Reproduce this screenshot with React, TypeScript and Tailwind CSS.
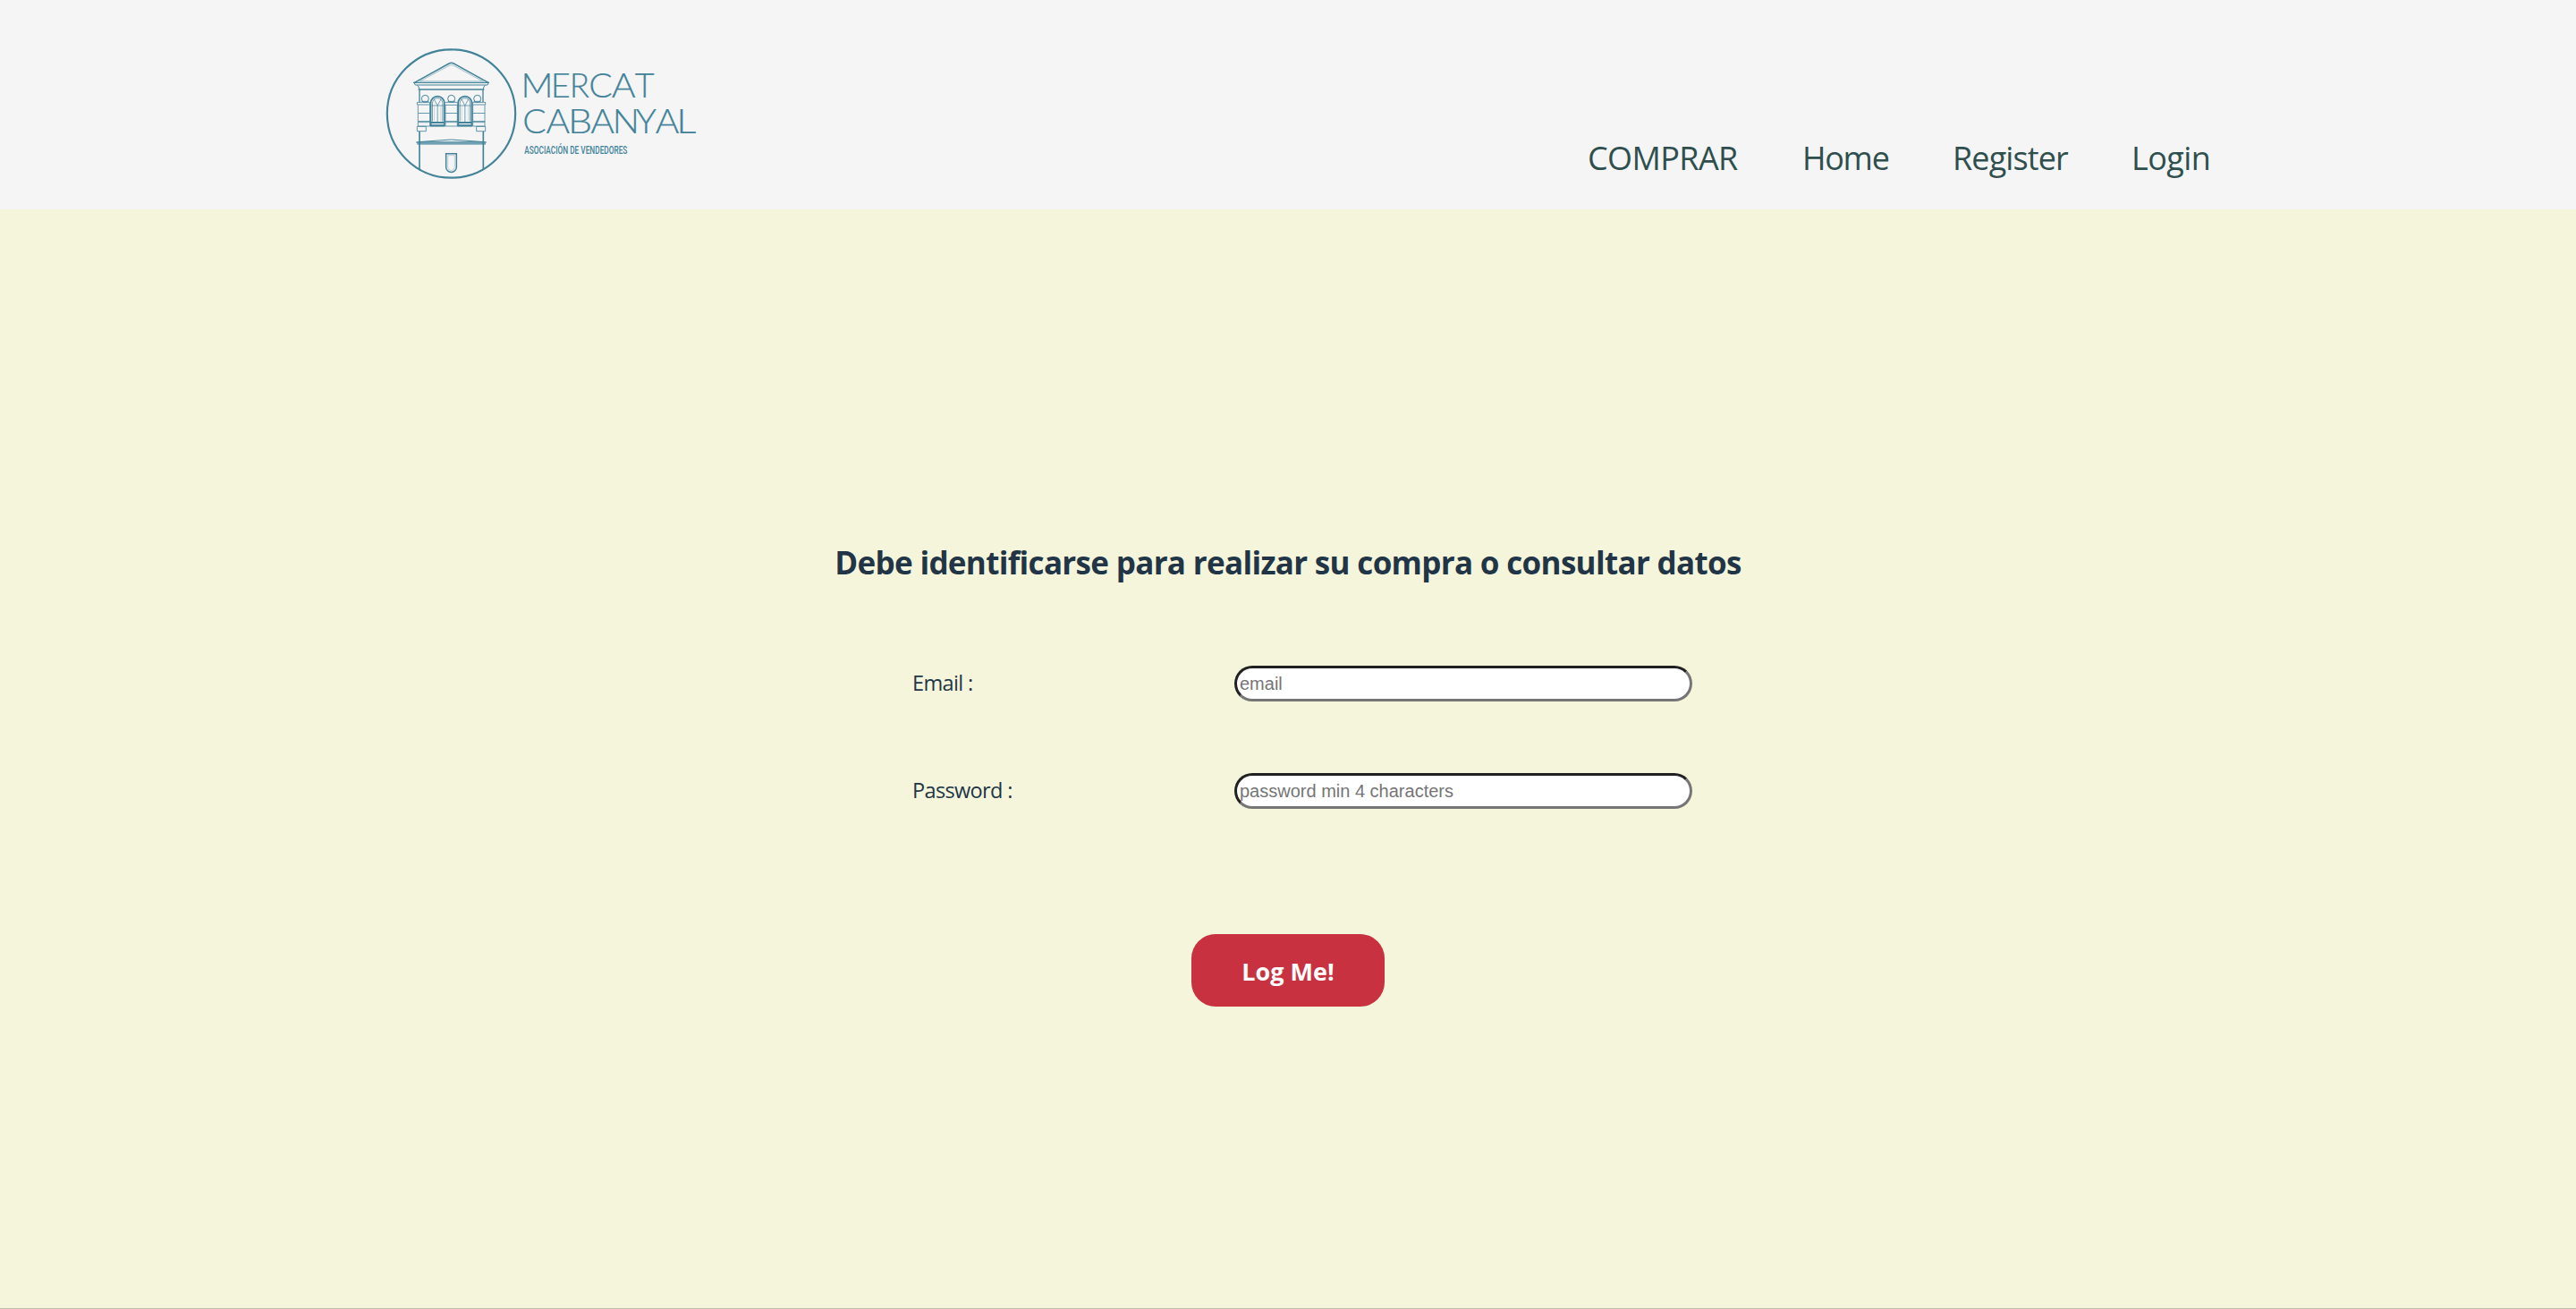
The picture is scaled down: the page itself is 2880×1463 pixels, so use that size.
const links = [
  { label: 'COMPRAR', style: 'w-[168px] tracking-[-0.6px]' },
  { label: 'Home', style: 'w-[96px] tracking-[-1.3px]' },
  { label: 'Register', style: 'w-[128px] tracking-[-0.9px]' },
  { label: 'Login', style: 'w-[88px] tracking-[-0.6px]' },
];

const wordmark: { y: number; letters: [string, number, number][] }[] = [
  { y: 207, letters: [['M', 487.5, 1.06], ['E', 587, 1.02], ['R', 650, 0.98], ['C', 715, 1.05], ['A', 791.5, 1.1], ['T', 869.5, 1.01]] },
  { y: 328, letters: [['C', 493, 1.05], ['A', 571.5, 1.09], ['B', 645, 1.15], ['A', 720.5, 1.09], ['N', 794.5, 1.07], ['Y', 872, 1.04], ['A', 938, 1.09], ['L', 1009, 1.17]] },
];

function Pier({ x, w }: { x: number; w: number }) {
  return (
    <path
      strokeWidth="2.4"
      d={`M${x} 232V303M${x + w} 232V303M${x} 259.500H${x + w}M${x} 286.500H${x + w}M${x} 290H${x + w}M${x} 303H${x + w}`}
    />
  );
}

function ArchWindow({ x }: { x: number }) {
  return (
    <g>
      <path strokeWidth="5.500" d={`M${x - 23} 302V226a23 23 0 0 1 46 0V302Z`} />
      <path strokeWidth="6" d={`M${x - 24} 291H${x + 24}M${x - 24} 301H${x + 24}`} />
      <path strokeWidth="2.200" d={`M${x - 17} 287V226a17 17 0 0 1 34 0V287M${x - 20} 234H${x + 20}M${x} 234V288M${x - 12} 212L${x} 234L${x + 12} 212`} />
      <path strokeWidth="1.200" opacity=".6" d={`M${x - 11} 238V286M${x + 11} 238V286`} />
    </g>
  );
}

function Logo() {
  return (
    <svg viewBox="0 0 1140 600" className="h-[200px] w-[380px] shrink-0" fill="none" stroke="#438399" aria-label="Mercat Cabanyal">
      <circle cx="253.500" cy="261" r="215" strokeWidth="6.500" />
      <path strokeWidth="4.500" d="M130 157L246 93Q254 89 262 93L378 157" />
      <path strokeWidth="2" d="M146 154L248 99Q254 96 260 99L362 154" opacity=".7" />
      <path strokeWidth="2" d="M150 152H358" opacity=".6" />
      <path strokeWidth="4" d="M126 157H381" />
      <path strokeWidth="3" d="M129 157L133 165H375L379 157" />
      <path strokeWidth="3" d="M139 166Q146 169 146 179M368 166Q361 169 361 179" />
      <path strokeWidth="4.500" d="M143 180H364" />
      <path strokeWidth="4" d="M147 180V222M360 180V222" />
      <g strokeWidth="3">
        <circle cx="166" cy="211" r="12" />
        <circle cx="254" cy="211" r="12" />
        <circle cx="341" cy="211" r="12" />
      </g>
      <path strokeWidth="2.500" d="M139 223H182V231H139ZM325 223H368V231H325ZM233 223H275M233 232H275M154 220H178M242 220H266M329 220H353" />
      <Pier x={142} w={40} />
      <Pier x={234} w={40} />
      <Pier x={326} w={40} />
      <ArchWindow x={207.5} />
      <ArchWindow x={299.5} />
      <path strokeWidth="2.500" d="M139 304H169V320H139ZM338 304H368V320H338Z" />
      <path strokeWidth="5" d="M147 321V447M361 321V447" />
      <path strokeWidth="4" d="M136 357H371M139 362.500H369" />
      <path strokeWidth="3" d="M142 356L253 348L365 356" />
      <path strokeWidth="4.500" d="M236 395H271V440a17.500 17.500 0 0 1-35 0Z" />
      <path strokeWidth="1.500" opacity=".6" d="M242 401H265V440a11.500 11.500 0 0 1-23 0Z" />
      <g fill="#438399" strokeWidth="0.7" className="font-['Lato']">
        {wordmark.map(({ y, letters }) =>
          letters.map(([char, x, stretch]) => (
            <text key={`${y}-${x}`} transform={`translate(${x} ${y}) scale(${stretch} 1)`} fontSize="112" fontWeight="300">
              {char}
            </text>
          )),
        )}
      </g>
      <text x="499" y="396" fontSize="39" fontWeight="500" textLength="345" lengthAdjust="spacingAndGlyphs" fill="#438399" stroke="none" className="font-['Roboto']">
        ASOCIACIÓN DE VENDEDORES
      </text>
    </svg>
  );
}

function Field({ label, type, placeholder }: { label: string; type: string; placeholder: string }) {
  return (
    <label className="flex h-10 w-[872px] items-center justify-between">
      <span className="pb-0.5 text-[23.5px] leading-[38px] tracking-[-0.65px]">{label}</span>
      <input
        type={type}
        placeholder={placeholder}
        className="h-10 w-[512px] rounded-[20px] border-[3px] border-t-[#212121] border-r-[#767676] border-b-[#767676] border-l-[#212121] bg-white px-[3px] font-['Liberation_Sans',sans-serif] text-[20px] placeholder:text-[#757575]"
      />
    </label>
  );
}

export default function App() {
  return (
    <div className="flex h-[1463px] w-[2880px] flex-col overflow-hidden border-b border-[#bcbcb4] bg-[#f5f5dc] font-['Open_Sans',sans-serif] text-[#213547]">
      <header className="flex h-[234px] shrink-0 justify-between bg-[#f5f5f5] pt-10 pr-[409px] pl-[420px]">
        <Logo />
        <nav className="mt-[110px] flex h-[54px] gap-[72px] text-[36px] leading-[54px] whitespace-nowrap text-[#2f4f4f]">
          {links.map((link) => (
            <a key={link.label} href="#" className={link.style}>{link.label}</a>
          ))}
        </nav>
      </header>
      <main className="flex flex-col items-center">
        <h1 className="mt-[368px] text-[35px] leading-[54px] font-bold tracking-[-0.68px] whitespace-nowrap">
          Debe identificarse para realizar su compra o consultar datos
        </h1>
        <form className="mt-[88px] flex flex-col items-center">
          <div className="ml-[32px] flex flex-col gap-20">
            <Field label="Email :" type="email" placeholder="email" />
            <Field label="Password :" type="password" placeholder="password min 4 characters" />
          </div>
          <button type="button" className="mt-[140px] h-[81px] w-[216px] rounded-[27px] bg-[#c83240] pt-[3px] text-[27px] font-bold text-white">
            Log Me!
          </button>
        </form>
      </main>
    </div>
  );
}
